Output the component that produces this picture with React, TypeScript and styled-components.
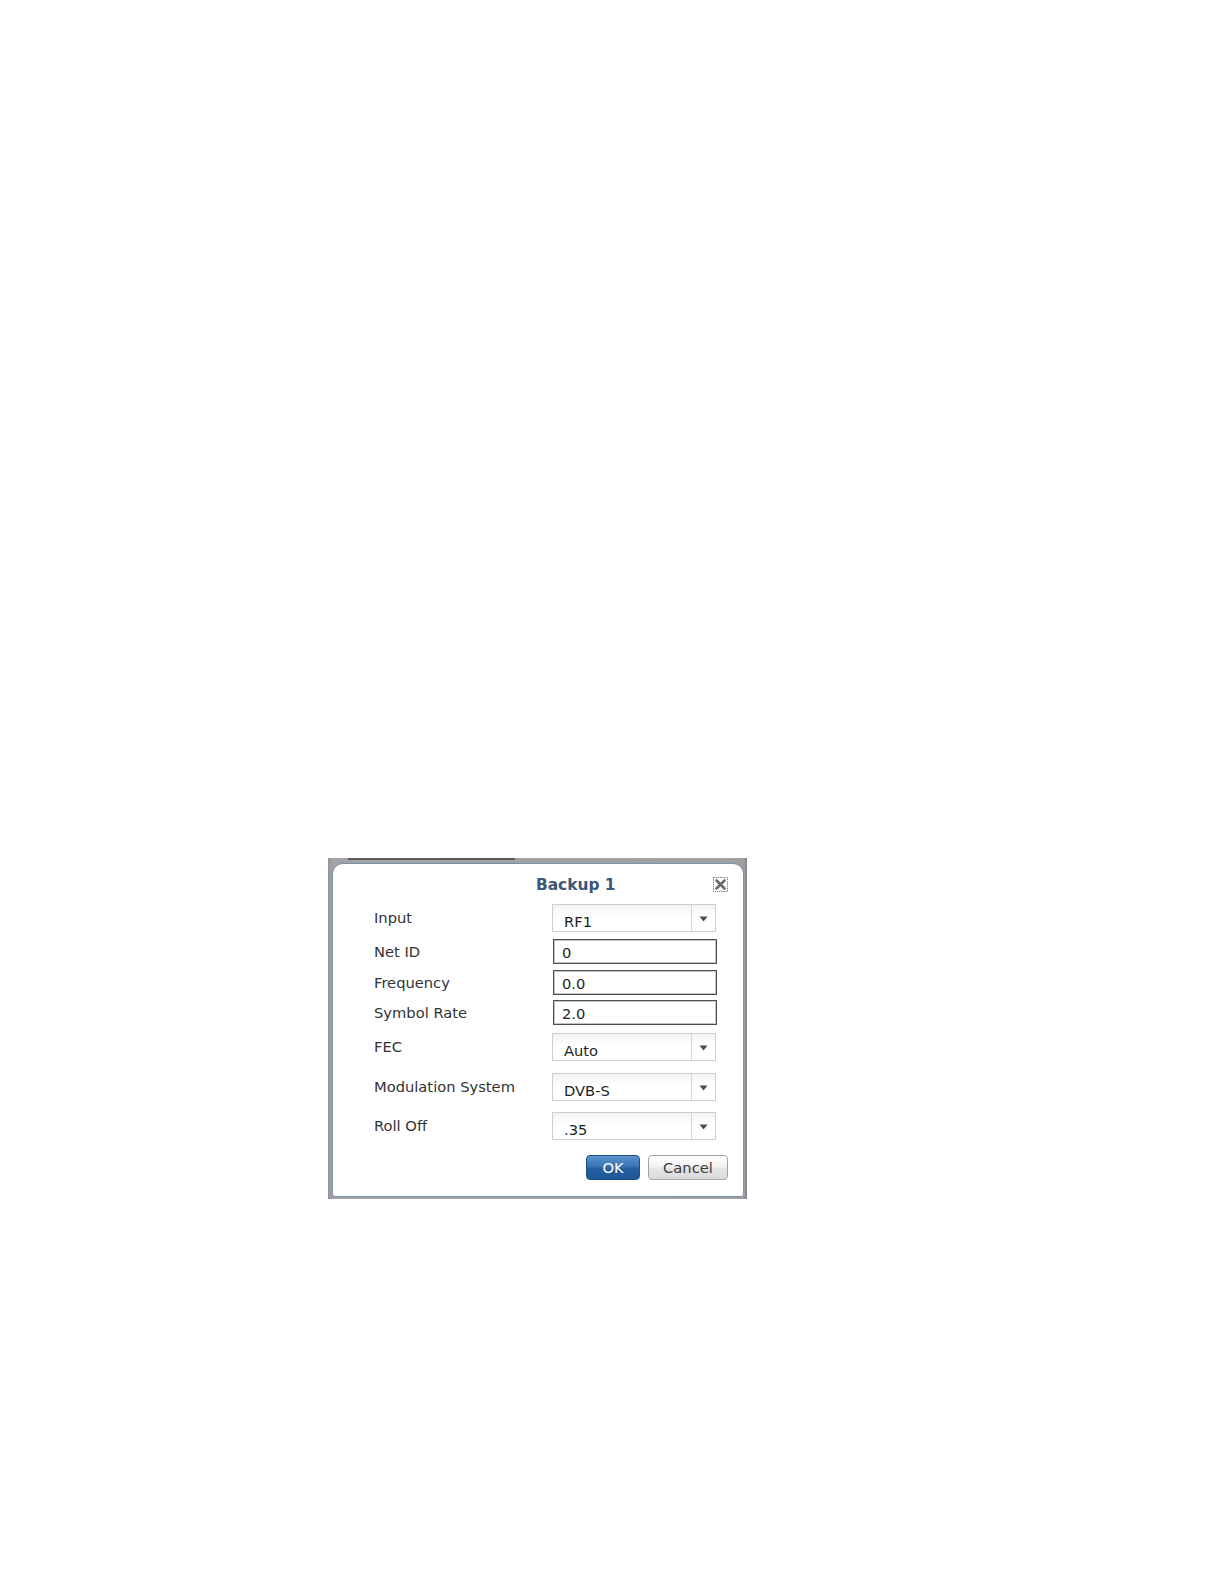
import React from "react";
import styled, { createGlobalStyle } from "styled-components";

const Global = createGlobalStyle`
  html, body { margin: 0; padding: 0; background: #ffffff; }
  body { font-family: "DejaVu Sans", Verdana, sans-serif; }
`;

const Page = styled.div`
  width: 1225px;
  height: 1584px;
  padding: 858px 0 0 328px;
  box-sizing: border-box;
`;

const Backdrop = styled.div`
  position: relative;
  width: 419px;
  height: 341px;
  box-sizing: border-box;
  background: linear-gradient(90deg, #8f949c 0px, #a3a3a3 4px, #a0a0a0 calc(100% - 3px), #7c7f86 100%);
  padding: 5px 3px 2px 4px;
  display: flex;
`;

const BackTab = styled.div`
  position: absolute;
  left: 20px;
  top: 0;
  width: 167px;
  height: 2px;
  background: #5a5a5a;
`;

const Dialog = styled.div`
  flex: 1;
  background: #ffffff;
  border: 1px solid #7d90aa;
  border-radius: 11px 11px 3px 3px;
  display: flex;
  flex-direction: column;
  padding: 0 15px 16px 41px;
`;

const TitleRow = styled.div`
  position: relative;
  height: 41px;
  display: flex;
  align-items: center;
  padding-left: 162px;
`;

const Title = styled.div`
  font-family: "DejaVu Sans", Verdana, sans-serif;
  font-weight: bold;
  font-size: 15.4px;
  color: #3d5677;
  padding-top: 1px;
`;

const Close = styled.button`
  position: absolute;
  right: 0;
  top: 13px;
  width: 15px;
  height: 15px;
  padding: 0;
  border: none;
  background: transparent;
  display: block;
`;

const Form = styled.div`
  display: flex;
  flex-direction: column;
`;

const Row = styled.div<{ $gap: number }>`
  display: grid;
  grid-template-columns: 178px 165px;
  align-items: center;
  margin-top: ${(p) => p.$gap}px;
`;

const Label = styled.div`
  font-size: 14.7px;
  color: #333333;
  line-height: 18px;
`;

const SelectBox = styled.div`
  height: 28px;
  width: 164px;
  box-sizing: border-box;
  border: 1px solid #cdcdcd;
  background: linear-gradient(#f2f2f2 0%, #ffffff 45%, #ffffff 100%);
  display: flex;
`;

const SelectValue = styled.div`
  flex: 1;
  font-size: 14.7px;
  color: #1e1e1e;
  padding: 8px 0 0 11px;
  line-height: 18px;
`;

const SelectArrow = styled.div`
  width: 23px;
  border-left: 1px solid #d6d6d6;
  display: flex;
  align-items: center;
  justify-content: center;
  padding-top: 2px;
`;

const TextBox = styled.div`
  height: 25px;
  width: 164px;
  margin-left: 1px;
  box-sizing: border-box;
  border: 1px solid #4e4e4e;
  box-shadow: inset 0 0 0 1px #c4c4c4;
  font-size: 14.7px;
  color: #1e1e1e;
  padding: 4px 0 0 8px;
  line-height: 18px;
`;

const Buttons = styled.div`
  display: flex;
  justify-content: flex-end;
  gap: 8px;
  margin-top: 15px;
`;

const Button = styled.button<{ $primary?: boolean; $w: number }>`
  width: ${(p) => p.$w}px;
  height: 25px;
  box-sizing: border-box;
  border-radius: 4px;
  font-family: "DejaVu Sans", Verdana, sans-serif;
  font-size: 14.7px;
  padding: 0;
  line-height: 22px;
  border: 1px solid ${(p) => (p.$primary ? "#1d4f87" : "#a3a3a3")};
  color: ${(p) => (p.$primary ? "#ffffff" : "#3a3a3a")};
  background: ${(p) =>
    p.$primary
      ? "linear-gradient(#5b93cf 0%, #3a74b4 45%, #255f9f 55%, #1f5896 100%)"
      : "linear-gradient(#ffffff 0%, #f3f3f3 45%, #e4e4e4 55%, #dadada 100%)"};
`;

const Arrow = () => (
  <svg width="9" height="6" viewBox="0 0 9 6">
    <path d="M0.5 0.5 H8.5 L4.5 5.5 Z" fill="#4a4a4a" />
  </svg>
);

const CloseIcon = () => (
  <svg width="15" height="15" viewBox="0 0 15 15">
    <rect x="0.5" y="0.5" width="14" height="14" fill="none" stroke="#6e6e6e" strokeWidth="1" strokeDasharray="1.2 1" />
    <path d="M3.5 3.5 L11.5 11.5 M11.5 3.5 L3.5 11.5" stroke="#6a6a6a" strokeWidth="2.6" strokeLinecap="round" />
  </svg>
);

type Field = { kind: "select" | "text"; label: string; value: string; gap: number };

const fields: Field[] = [
  { kind: "select", label: "Input", value: "RF1", gap: 0 },
  { kind: "text", label: "Net ID", value: "0", gap: 7 },
  { kind: "text", label: "Frequency", value: "0.0", gap: 6 },
  { kind: "text", label: "Symbol Rate", value: "2.0", gap: 5 },
  { kind: "select", label: "FEC", value: "Auto", gap: 8 },
  { kind: "select", label: "Modulation System", value: "DVB-S", gap: 12 },
  { kind: "select", label: "Roll Off", value: ".35", gap: 11 },
];

export default function App() {
  return (
    <>
      <Global />
      <Page>
        <Backdrop>
          <BackTab />
          <Dialog>
            <TitleRow>
              <Title>Backup 1</Title>
              <Close aria-label="close">
                <CloseIcon />
              </Close>
            </TitleRow>
            <Form>
              {fields.map((f) => (
                <Row key={f.label} $gap={f.gap}>
                  <Label>{f.label}</Label>
                  {f.kind === "select" ? (
                    <SelectBox>
                      <SelectValue>{f.value}</SelectValue>
                      <SelectArrow>
                        <Arrow />
                      </SelectArrow>
                    </SelectBox>
                  ) : (
                    <TextBox>{f.value}</TextBox>
                  )}
                </Row>
              ))}
            </Form>
            <Buttons>
              <Button $primary $w={54}>OK</Button>
              <Button $w={80}>Cancel</Button>
            </Buttons>
          </Dialog>
        </Backdrop>
      </Page>
    </>
  );
}
